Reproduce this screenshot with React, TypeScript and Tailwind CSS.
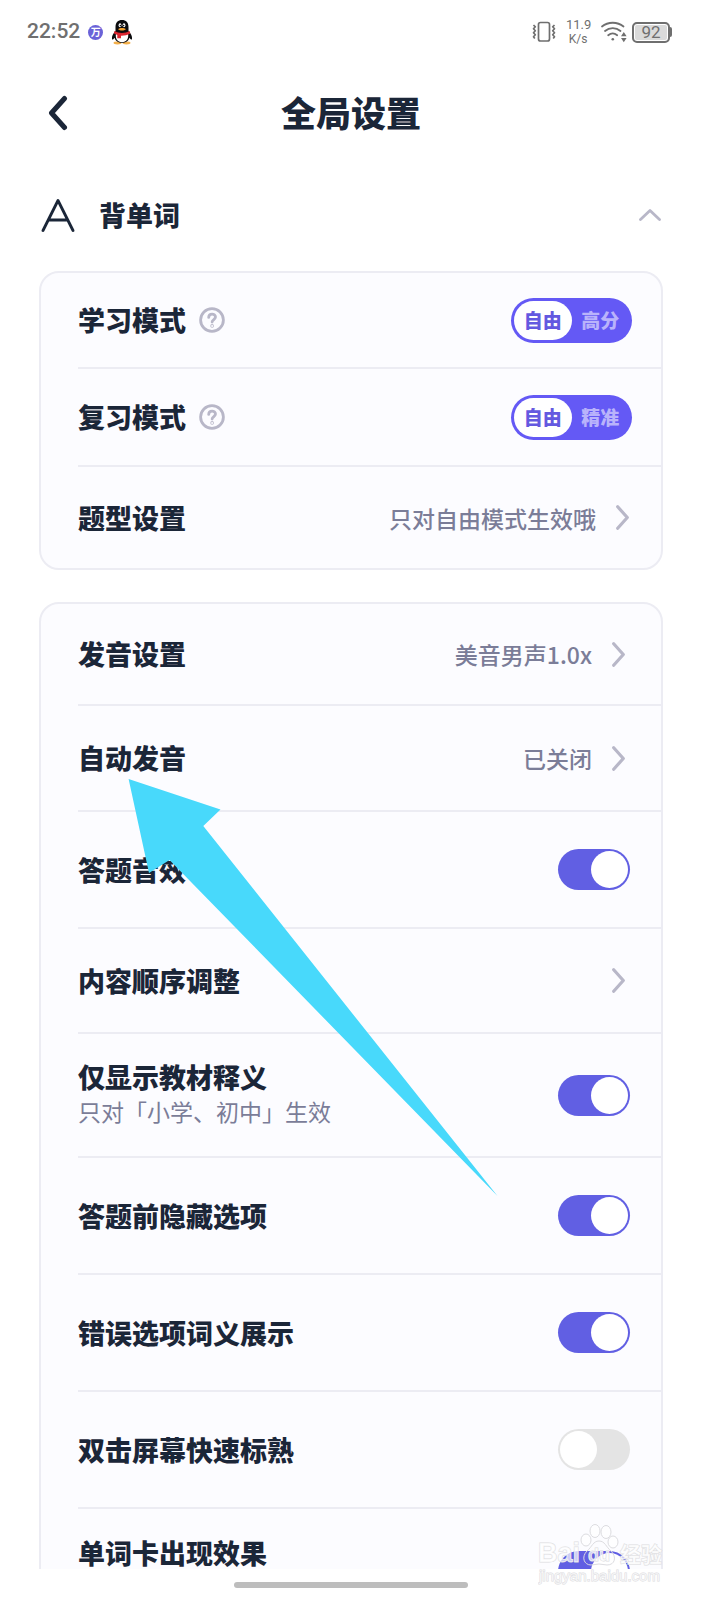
import { useState } from 'react';

type Item = {
  label: string;
  kind: 'segment' | 'link' | 'toggle';
  options?: string[];
  value?: string;
  sub?: string;
  on?: boolean;
  height: string;
};

const STUDY: Item[] = [
  { label: '学习模式', kind: 'segment', options: ['自由', '高分'], height: 'min-h-24' },
  { label: '复习模式', kind: 'segment', options: ['自由', '精准'], height: 'min-h-[98px]' },
  { label: '题型设置', kind: 'link', value: '只对自由模式生效哦', height: 'min-h-[101px]' },
];

const ANSWER: Item[] = [
  { label: '发音设置', kind: 'link', value: '美音男声1.0x', height: 'min-h-[102px]' },
  { label: '自动发音', kind: 'link', value: '已关闭', height: 'min-h-[106px]' },
  { label: '答题音效', kind: 'toggle', on: true, height: 'min-h-[117px]' },
  { label: '内容顺序调整', kind: 'link', height: 'min-h-[105px]' },
  { label: '仅显示教材释义', kind: 'toggle', on: true, sub: '只对「小学、初中」生效', height: 'min-h-[124px]' },
  { label: '答题前隐藏选项', kind: 'toggle', on: true, height: 'min-h-[117px]' },
  { label: '错误选项词义展示', kind: 'toggle', on: true, height: 'min-h-[117px]' },
  { label: '双击屏幕快速标熟', kind: 'toggle', on: false, height: 'min-h-[117px]' },
  { label: '单词卡出现效果', kind: 'toggle', on: true, sub: '', height: 'min-h-[124px]' },
];

function Penguin() {
  return (
    <svg viewBox="0 0 22 26" className="h-[26px] w-[22px]" aria-hidden="true">
      <ellipse cx="6.5" cy="24" rx="4" ry="1.4" fill="#f3b04b" />
      <ellipse cx="15.5" cy="24" rx="4" ry="1.4" fill="#f3b04b" />
      <path d="M4.5 12C2 14.500.6 17.500 1 20c.3 1.300 1.600.2 2.500-1.200C4.500 22 7 24 11 24s6.500-2 7.500-5.200c.9 1.400 2.200 2.500 2.500 1.200.4-2.500-1-5.500-3.500-8V8C17.500 3.500 15 1 11 1S4.500 3.500 4.500 8z" fill="#0b0b0d" />
      <path d="M5 14.500h12c1 5-1.500 8.700-6 8.700s-7-3.700-6-8.700z" fill="#fff" />
      <path d="M3.300 12c4.700 2.600 10.700 2.600 15.400 0l.6 2.600c-3 1.700-6.300 2.200-9.300 2.100v2.600H6.300v-3.200l-3.300-1.500z" fill="#dc2630" />
      <ellipse cx="9" cy="6.300" rx="1.400" ry="2" fill="#fff" />
      <ellipse cx="13" cy="6.300" rx="1.400" ry="2" fill="#fff" />
      <circle cx="9.400" cy="6.600" r=".8" fill="#111" />
      <circle cx="12.600" cy="6.600" r=".8" fill="#111" />
      <path d="M7 10c2-1.500 6-1.500 8 0-2 2-6 2-8 0z" fill="#f5a22d" />
    </svg>
  );
}

function StatusBar() {
  return (
    <div className="flex h-16 shrink-0 items-center pl-[27px] pr-[30px] font-[Roboto,sans-serif] text-[#6f6f6f]">
      <span className="text-[21px] font-medium">22:52</span>
      <span className="ml-2 grid size-[15px] place-items-center rounded-full bg-[#6a62d8] font-['Noto_Sans_CJK_SC',sans-serif] text-[10px] leading-none font-bold text-white">万</span>
      <span className="ml-2"><Penguin /></span>
      <svg viewBox="0 0 24 22" className="ml-auto h-[22px] w-6" fill="none" stroke="#6f6f6f" strokeWidth="1.700" strokeLinejoin="round" aria-hidden="true">
        <rect x="6.500" y="1.500" width="11" height="18.500" rx="2" />
        <path d="M1.500 4l1.800 1.800-1.800 2 1.800 2-1.800 2 1.800 2-1.800 2 1.300 1.700M22.500 4l-1.800 1.800 1.800 2-1.800 2 1.800 2-1.800 2 1.800 2-1.300 1.700" />
      </svg>
      <div className="mx-2.5 w-6 text-center text-[13px] leading-[14px]">
        <div>11.9</div>
        <div className="text-[12px]">K/s</div>
      </div>
      <svg viewBox="0 0 28 22" className="h-[22px] w-7" fill="none" stroke="#6f6f6f" strokeWidth="1.800" strokeLinecap="round" aria-hidden="true">
        <path d="M2 5.500c6-5 15.500-5 21.500 0M5 10c4.500-3.800 11-3.800 15.500 0M8.200 14.200c2.700-2.200 6.300-2.200 9 0" />
        <circle cx="12.800" cy="18.300" r="1.300" fill="#6f6f6f" stroke="none" />
        <path d="M23.800 11l2.800 4.300H21zM23.800 21.200l2.800-4.200H21z" fill="#6f6f6f" stroke="none" />
      </svg>
      <div className="ml-1 flex items-center">
        <span className="grid h-[21px] w-[38px] place-items-center rounded-[5px] border-2 border-[#6f6f6f] bg-[#dadada] text-[17px] leading-none ring-1 ring-inset ring-white">92</span>
        <span className="h-2.5 w-0.5 rounded-r-xs bg-[#6f6f6f]" />
      </div>
    </div>
  );
}

function Chevron() {
  return (
    <svg viewBox="0 0 13 25" className="h-[25px] w-[13px] shrink-0" fill="none" stroke="#b8b7c8" strokeWidth="3.200" strokeLinecap="round" strokeLinejoin="round" aria-hidden="true">
      <path d="M1.700 1.800l9.600 10.700-9.600 10.700" />
    </svg>
  );
}

function Help({ label }: { label: string }) {
  return (
    <button type="button" aria-label={`${label}说明`} className="ml-[13px]">
      <svg viewBox="0 0 26 26" className="size-[26px]" fill="none" stroke="#b8b7c8" strokeWidth="2.800" strokeLinecap="round" strokeLinejoin="round">
        <circle cx="13" cy="13" r="11.400" />
        <path d="M9.700 10.400c0-4.500 6.800-4.300 6.800-.3 0 2.300-3.400 2.600-3.400 5" />
        <circle cx="13.100" cy="18.900" r=".4" />
      </svg>
    </button>
  );
}

function Segment({ name, options }: { name: string; options: string[] }) {
  const [picked, setPicked] = useState(0);
  return (
    <div role="radiogroup" aria-label={name} className="flex h-[45px] w-[121px] rounded-full bg-[#6459f5] p-[3px]">
      {options.map((o, i) => (
        <label key={o} className={`grid flex-1 cursor-pointer place-items-center rounded-full pb-0.5 text-[19px] leading-none font-black ${i === picked ? 'bg-white text-[#6459e0]' : 'text-[#b9b3fb]'}`}>
          <input type="radio" name={name} checked={i === picked} onChange={() => setPicked(i)} className="sr-only" />
          {o}
        </label>
      ))}
    </div>
  );
}

function Row({ item, linkEnd }: { item: Item; linkEnd: string }) {
  const [on, setOn] = useState(!!item.on);
  const base = `flex w-full items-center border-b-2 border-[#ececf3] text-left group-last:border-b-0 ${item.height}`;
  const title = <span className="text-[27px] leading-8 font-black text-[#1b2638]">{item.label}</span>;

  if (item.kind === 'link') {
    return (
      <button type="button" className={`${base} ${linkEnd}`}>
        {title}
        <span className="mr-5 ml-auto text-[23px] leading-8 font-medium text-[#7b7d98]">{item.value}</span>
        <Chevron />
      </button>
    );
  }

  if (item.kind === 'segment') {
    return (
      <div className={`${base} pr-[29px]`}>
        {title}
        <Help label={item.label} />
        <div className="ml-auto"><Segment name={item.label} options={item.options ?? []} /></div>
      </div>
    );
  }

  return (
    <label className={`${base} cursor-pointer pr-[31px]`}>
      <span className="flex flex-col">
        {title}
        {item.sub !== undefined && <span className="min-h-9 text-[23px] leading-9 text-[#7b7d98]">{item.sub}</span>}
      </span>
      <input type="checkbox" role="switch" checked={on} onChange={(e) => setOn(e.target.checked)} className="sr-only" />
      <span className={`ml-auto flex h-[41px] w-[72px] shrink-0 rounded-full p-0.5 ${on ? 'justify-end bg-[#615fe3]' : 'bg-[#e4e4e4]'}`}>
        <span className="size-[37px] rounded-full bg-white" />
      </span>
    </label>
  );
}

function Card({ items, linkEnd }: { items: Item[]; linkEnd: string }) {
  return (
    <ul className="rounded-[20px] border-2 border-[#ececf3] bg-[#fcfcff] pl-[37px]">
      {items.map((item) => (
        <li key={item.label} className="group"><Row item={item} linkEnd={linkEnd} /></li>
      ))}
    </ul>
  );
}

function Watermark() {
  return (
    <svg viewBox="0 0 130 64" className="absolute right-[34px] bottom-3 h-16 w-[130px]" aria-hidden="true">
      <g fill="#fff" fillOpacity=".7" stroke="#dcdce0" strokeWidth="1">
        <ellipse cx="48" cy="16" rx="5" ry="6" />
        <ellipse cx="57" cy="7" rx="5" ry="6.500" />
        <ellipse cx="68" cy="8" rx="5" ry="6.500" />
        <ellipse cx="75" cy="18" rx="5" ry="6" />
        <path d="M61 17c-6 0-7 6-12 10-6 6-3 14 4 14 3 0 5-1 8-1s5 1 8 1c8 0 10-8 4-14-5-4-6-10-12-10z" fill="none" />
      </g>
      <g fill="#fff" fillOpacity=".7" stroke="#dcdce0" strokeWidth="1" paintOrder="stroke" fontFamily="'Liberation Sans', 'Noto Sans CJK SC', sans-serif">
        <text x="0" y="38" fontSize="27" fontWeight="700">Bai</text>
        <text x="50" y="37" fontSize="18" fontWeight="700">du</text>
        <text x="82" y="38" fontSize="21" fontWeight="700">经验</text>
        <text x="1" y="57" fontSize="15">jingyan.baidu.com</text>
      </g>
    </svg>
  );
}

export default function App() {
  const [open, setOpen] = useState(true);

  return (
    <div className="relative flex h-screen flex-col overflow-hidden bg-white font-['Noto_Sans_CJK_SC',sans-serif]">
      <StatusBar />

      <header className="grid h-[98px] shrink-0 grid-cols-[1fr_auto_1fr] items-center px-12">
        <button type="button" aria-label="返回" className="justify-self-start">
          <svg viewBox="0 0 20 36" className="h-9 w-5" fill="none" stroke="#1b2638" strokeWidth="5" strokeLinecap="round" strokeLinejoin="round">
            <path d="M16.500 3.500L3.500 18l13 14.500" />
          </svg>
        </button>
        <h1 className="pb-1 text-[35px] leading-none font-black text-[#1b2638]">全局设置</h1>
      </header>

      <main className="min-h-0 flex-1 overflow-hidden px-[39px]">
        <button type="button" aria-expanded={open} onClick={() => setOpen(!open)} className="flex h-[109px] w-full items-center px-0.5 pb-1 text-left">
          <svg viewBox="0 0 34 34" className="size-[34px]" fill="none" stroke="#1b2638" strokeWidth="2.800" strokeLinecap="round" strokeLinejoin="round" aria-hidden="true">
            <path d="M2 32.500L17 2.500l15 30M7.500 22h19" />
          </svg>
          <span className="ml-6 text-[27px] leading-none font-black text-[#1b2638]">背单词</span>
          <svg viewBox="0 0 22 12" className="ml-auto h-3 w-[22px]" fill="none" stroke="#b8b7c8" strokeWidth="2.800" strokeLinecap="round" strokeLinejoin="round" aria-hidden="true">
            <path d="M1.500 10.500L11 1.500l9.500 9" />
          </svg>
        </button>

        {open && (
          <div className="flex flex-col gap-8">
            <Card items={STUDY} linkEnd="pr-8" />
            <Card items={ANSWER} linkEnd="pr-9" />
          </div>
        )}
      </main>

      <div className="grid h-[31px] shrink-0 place-items-center">
        <span className="h-1.5 w-1/3 rounded-full bg-[#bdbdbd]" />
      </div>

      {/* pointer over the auto-pronounce row */}
      <svg viewBox="0 0 370 418" className="pointer-events-none absolute top-[779px] left-32 h-[418px] w-[370px]" fill="#48d9fb" aria-hidden="true">
        <path d="M.6 0L92.500 30.500 75.300 47 369.500 417 41.500 81 21 94z" />
      </svg>
      <Watermark />
    </div>
  );
}
